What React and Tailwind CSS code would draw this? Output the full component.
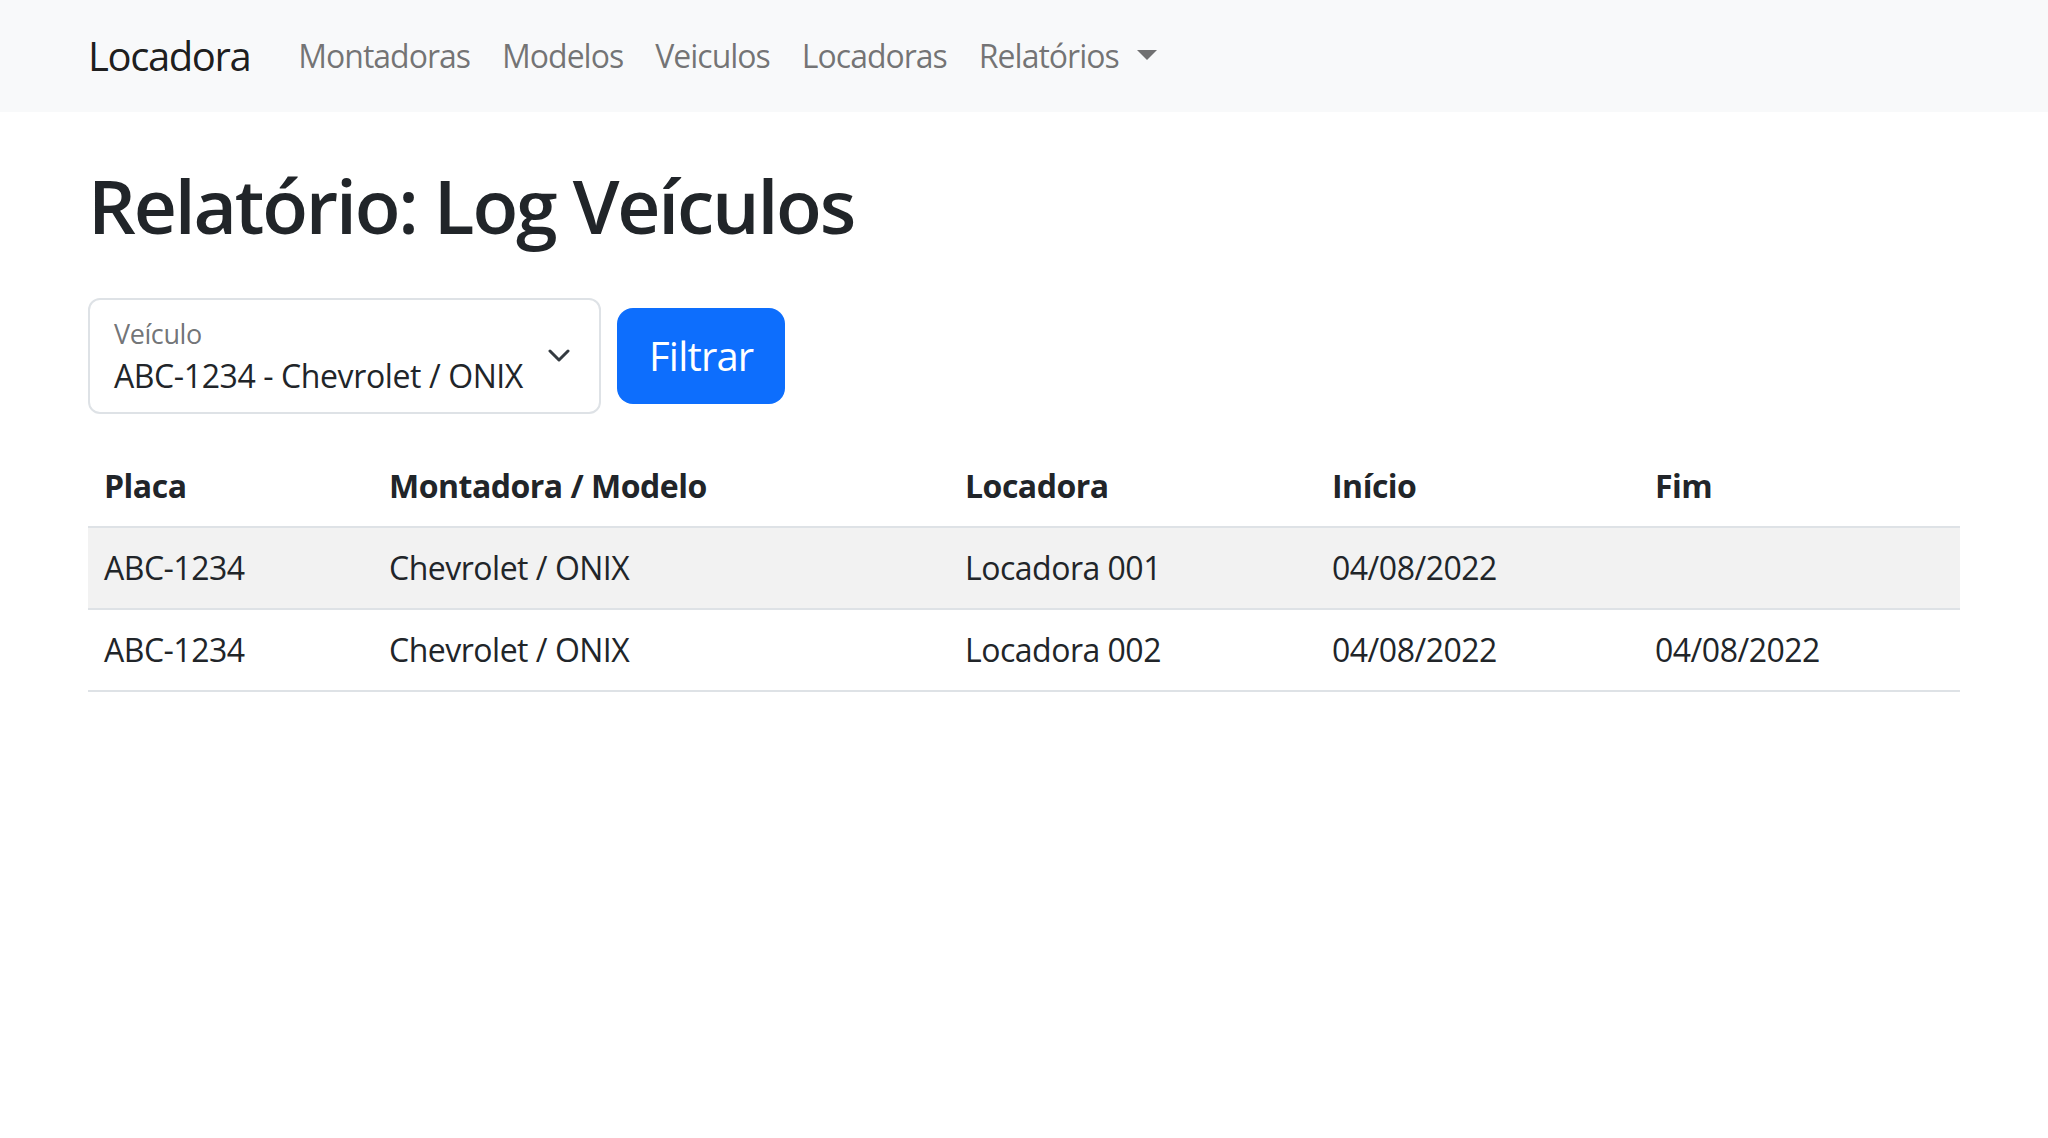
import React, { useState } from 'react';

const rows = [
  { placa: 'ABC-1234', modelo: 'Chevrolet / ONIX', locadora: 'Locadora 001', inicio: '04/08/2022', fim: '' },
  { placa: 'ABC-1234', modelo: 'Chevrolet / ONIX', locadora: 'Locadora 002', inicio: '04/08/2022', fim: '04/08/2022' },
];

const navLinks = ['Montadoras', 'Modelos', 'Veiculos', 'Locadoras'];

const App = () => {
  const [veiculo] = useState('ABC-1234 - Chevrolet / ONIX');

  return (
    <div className="min-h-screen bg-white text-[#212529] font-['Open_Sans',sans-serif]">
      <nav className="bg-[#f8f9fa] h-[112px]">
        <div className="w-[1920px] mx-auto px-6 h-full flex items-center">
          <a className="text-[40px] leading-[60px] text-black/90 mr-8 tracking-[-1.4px]">Locadora</a>
          {navLinks.map(link => (
            <a key={link} className="text-[32px] leading-[48px] px-4 text-black/55 tracking-[-1px]">{link}</a>
          ))}
          <a className="text-[32px] leading-[48px] px-4 text-black/55 tracking-[-1px] flex items-center">
            Relatórios
            <span className="ml-[18px] -mt-[2px] w-0 h-0 border-l-[10px] border-r-[10px] border-t-[10px] border-l-transparent border-r-transparent border-t-black/55" />
          </a>
        </div>
      </nav>

      <main className="w-[1920px] mx-auto px-6 pt-12">
        <h1 className="text-[75px] leading-[90px] font-semibold tracking-[-2.2px] mb-12">Relatório: Log Veículos</h1>

        <form className="flex items-center gap-4 mb-8" onSubmit={e => e.preventDefault()}>
          <div className="relative w-[513px] h-[116px] border-2 border-[#dee2e6] rounded-[12px] px-6 pt-[14px]">
            <div className="text-[27px] leading-[40px] text-[#212529]/65 tracking-[-0.4px]">Veículo</div>
            <div className="text-[32px] leading-[44px] tracking-[-0.4px]">{veiculo}</div>
            <svg className="absolute right-[29px] top-[49px]" width="22" height="14" viewBox="0 0 22 14" fill="none">
              <path d="M2 2l9 9 9-9" stroke="#343a40" strokeWidth="3" strokeLinecap="round" strokeLinejoin="round" />
            </svg>
          </div>
          <button type="submit" className="h-[96px] px-8 bg-[#0d6efd] text-white text-[40px] tracking-[-0.8px] rounded-[16px]">Filtrar</button>
        </form>

        <table className="w-full text-left text-[32px] leading-[48px] border-collapse tracking-[-0.5px]">
          <thead>
            <tr className="border-b-2 border-[#dee2e6]">
              <th className="w-[285px] p-4 font-bold">Placa</th>
              <th className="w-[576px] p-4 font-bold">Montadora / Modelo</th>
              <th className="w-[367px] p-4 font-bold">Locadora</th>
              <th className="w-[323px] p-4 font-bold">Início</th>
              <th className="p-4 font-bold">Fim</th>
            </tr>
          </thead>
          <tbody>
            {rows.map((r, i) => (
              <tr key={i} className={`border-b-2 border-[#dee2e6] ${i % 2 === 0 ? 'bg-[#f2f2f2]' : 'bg-white'}`}>
                <td className="p-4">{r.placa}</td>
                <td className="p-4">{r.modelo}</td>
                <td className="p-4">{r.locadora}</td>
                <td className="p-4">{r.inicio}</td>
                <td className="p-4">{r.fim}</td>
              </tr>
            ))}
          </tbody>
        </table>
      </main>
    </div>
  );
};

export default App;
